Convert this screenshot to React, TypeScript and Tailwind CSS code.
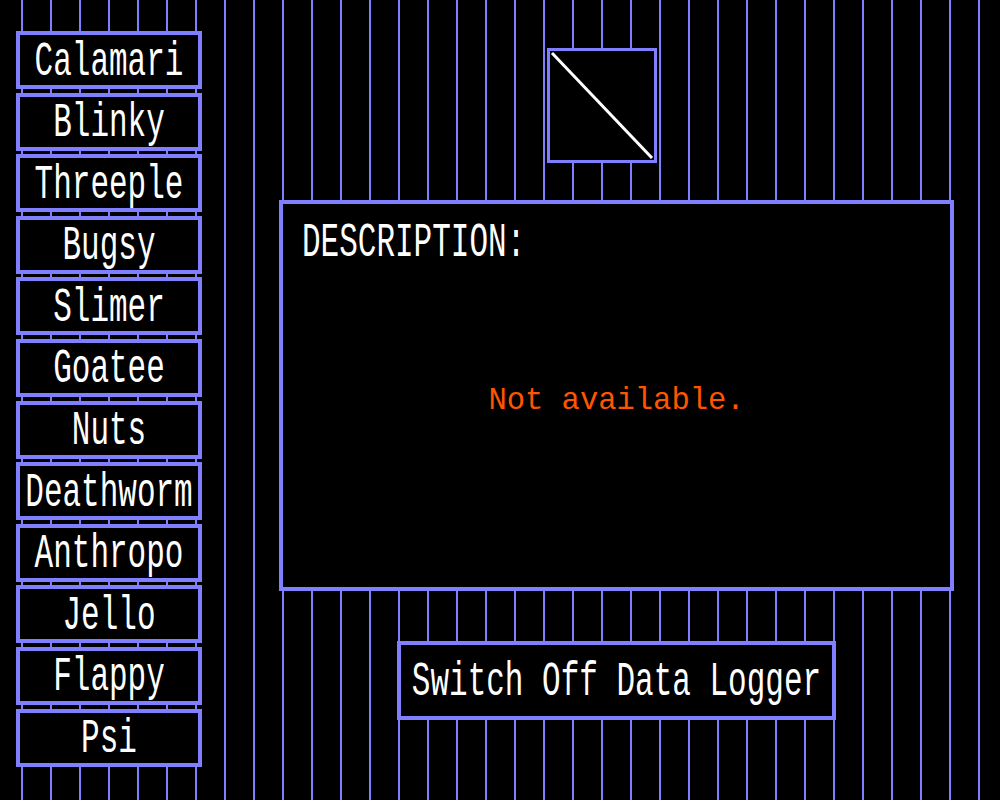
import React from "react";

const names = [
  "Calamari",
  "Blinky",
  "Threeple",
  "Bugsy",
  "Slimer",
  "Goatee",
  "Nuts",
  "Deathworm",
  "Anthropo",
  "Jello",
  "Flappy",
  "Psi",
];

function TallText({ children }: { children: React.ReactNode }) {
  return (
    <span className="inline-block scale-y-[1.55] whitespace-pre text-[31px] leading-none text-white [font-family:'Liberation_Mono',monospace]">
      {children}
    </span>
  );
}

export default function App() {
  return (
    <div className="flex h-[800px] w-[1000px] overflow-hidden bg-black bg-[repeating-linear-gradient(90deg,transparent_0px,transparent_21px,#7f7fff_21px,#7f7fff_23px,transparent_23px,transparent_29px)]">
      <div className="ml-[16px] mt-[31px] flex w-[186px] shrink-0 flex-col gap-[3.6px]">
        {names.map((n) => (
          <div
            key={n}
            className="flex h-[58px] items-center justify-center border-4 border-[#7f7fff] bg-black pt-[2px]"
          >
            <TallText>{n}</TallText>
          </div>
        ))}
      </div>
      <div className="ml-[77px] flex w-[675px] shrink-0 flex-col pt-[48px]">
        <div className="ml-[268px] h-[115px] w-[110px] border-[3px] border-[#7f7fff] bg-black">
          <svg width="104" height="109" viewBox="0 0 104 109" className="block">
            <line x1="2" y1="2" x2="102" y2="107" stroke="white" strokeWidth="3" />
          </svg>
        </div>
        <div className="mt-[37px] h-[391px] border-4 border-[#7f7fff] bg-black">
          <div className="pl-[19px] pt-[23px]">
            <TallText>DESCRIPTION:</TallText>
          </div>
          <div className="mt-[128px] text-center text-[30.5px] leading-none text-[#ff5500] [font-family:'Liberation_Mono',monospace]">
            Not available.
          </div>
        </div>
        <div className="mt-[50px] flex h-[79px] w-[439px] items-center justify-center self-center border-4 border-[#7f7fff] bg-black pt-[1px]">
          <TallText>Switch Off Data Logger</TallText>
        </div>
      </div>
    </div>
  );
}
